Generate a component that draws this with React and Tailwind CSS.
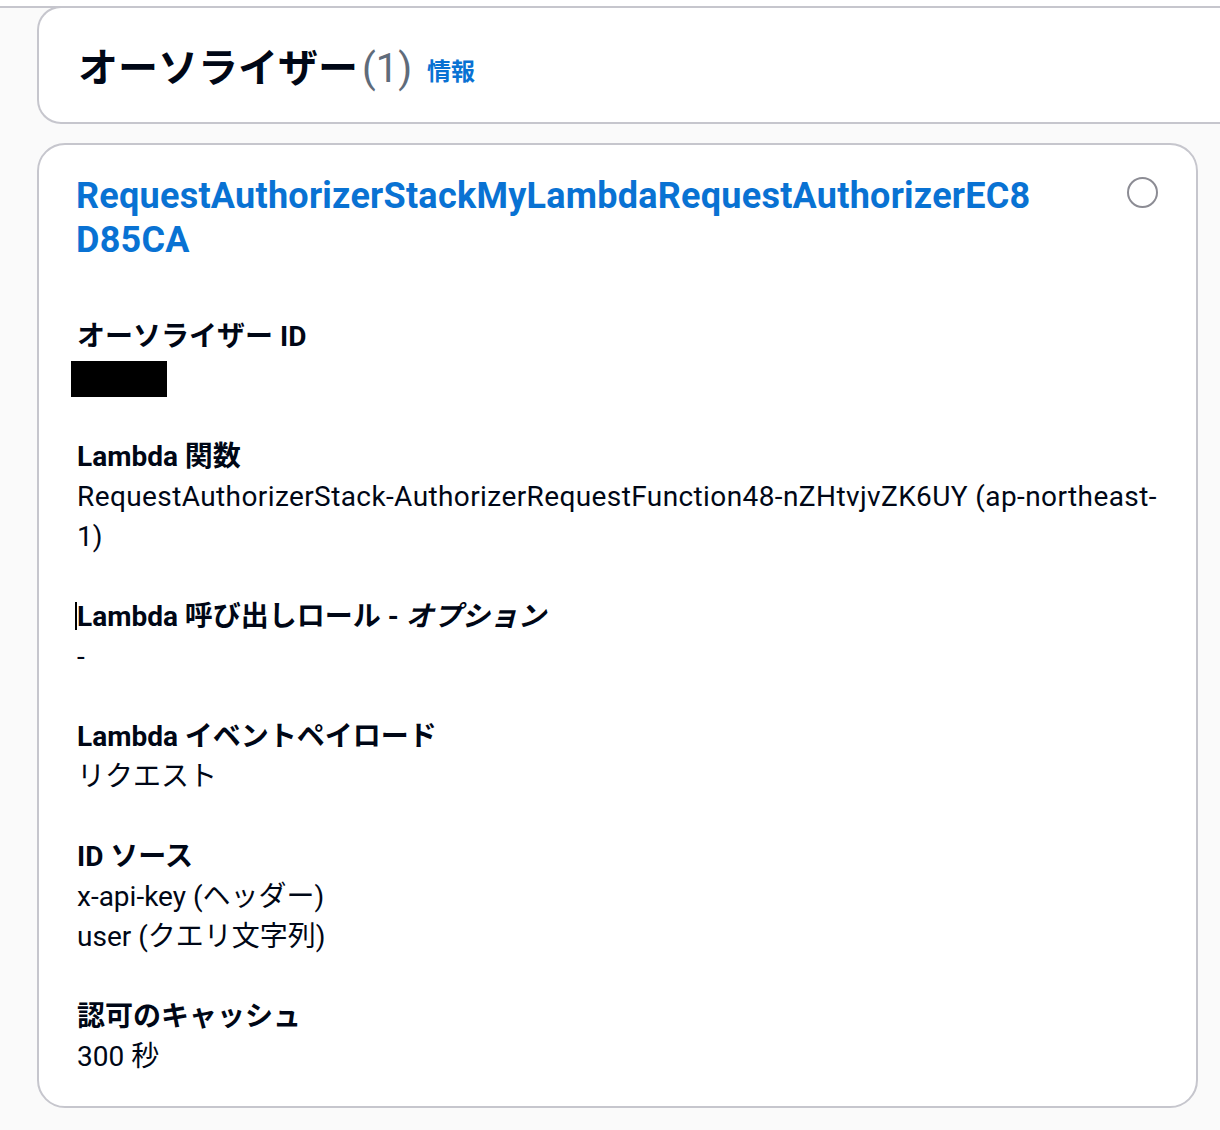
import React from "react";

const font = "[font-family:Roboto,'Noto_Sans_CJK_JP',sans-serif]";

const Field = ({ label, children }) => (
  <div className="flex flex-col">
    <div className="text-[28px] leading-[40px] font-bold text-[#000716]">{label}</div>
    <div className="text-[28px] leading-[40px] text-[#000716]">{children}</div>
  </div>
);

export default function App() {
  return (
    <div className={`min-h-screen bg-white pt-[6px] ${font}`}>
      <div className="min-h-[1124px] border-t-2 border-[#c6c6cd] bg-[#fafafa] pb-[20px]">
        {/* header */}
        <div className="-mt-[2px] ml-[37px] flex h-[118px] items-center rounded-l-[24px] border-2 border-r-0 border-[#c6c6cd] bg-white pl-[39px] pt-[8px]">
          <h2 className="text-[40px] font-bold leading-[48px] text-[#000716]">オーソライザー</h2>
          <span className="ml-[4px] text-[40px] leading-[48px] text-[#5f6b7a]">(1)</span>
          <a href="#" className="ml-[15px] mt-[6px] text-[24px] font-bold text-[#0972d3]">情報</a>
        </div>

        {/* card */}
        <div className="ml-[37px] mt-[19px] w-[1161px] rounded-[28px] border-2 border-[#c6c6cd] bg-white pb-[29px] pl-[38px] pr-[38px] pt-[29px]">
          <div className="flex items-start justify-between">
            <a href="#" className="-ml-[1px] text-[36px] font-bold leading-[44px] tracking-[0.25px] text-[#0972d3]">
              RequestAuthorizerStackMyLambdaRequestAuthorizerEC8
              <br />
              D85CA
            </a>
            <span className="mt-[3px] h-[31px] w-[31px] shrink-0 rounded-full border-2 border-[#8c8c94] bg-white" />
          </div>

          <div className="mt-[55px] flex flex-col gap-[40px]">
            <Field label="オーソライザー ID">
              <div className="-ml-[6px] mt-[4px] h-[36px] w-[96px] bg-black" />
            </Field>

            <Field label="Lambda 関数">
              <span className="whitespace-nowrap tracking-[0.4px]">RequestAuthorizerStack-AuthorizerRequestFunction48-nZHtvjvZK6UY (ap-northeast-</span>
              <br />
              1)
            </Field>

            <Field
              label={
                <>
                  <span className="-ml-[2px] inline-block h-[28px] w-[2px] bg-black align-[-4px]" />
                  Lambda 呼び出しロール - <em className="italic">オプション</em>
                </>
              }
            >
              -
            </Field>

            <Field label="Lambda イベントペイロード">リクエスト</Field>

            <Field label="ID ソース">
              x-api-key (ヘッダー)
              <br />
              user (クエリ文字列)
            </Field>

            <Field label="認可のキャッシュ">300 秒</Field>
          </div>
        </div>
      </div>
    </div>
  );
}
